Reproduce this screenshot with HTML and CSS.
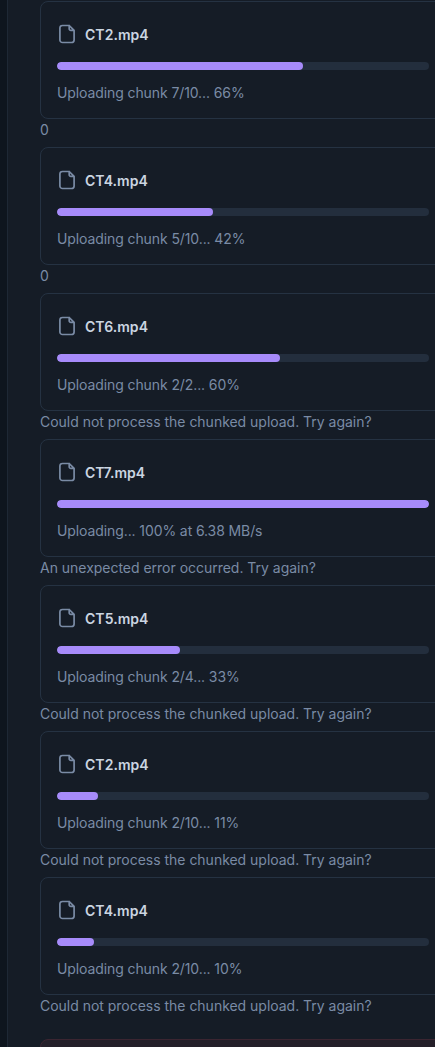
FILE: index.html
```html
<!DOCTYPE html>
<html lang="en">
<head>
  <meta charset="UTF-8">
  <title>Uploads</title>
  <link rel="stylesheet" href="styles.css">
</head>
<body>

  <!-- File icon shared by all upload cards -->
  <svg class="icon-defs" width="0" height="0">
    <symbol id="file-icon" viewBox="0 0 20 20">
      <path d="M12.2 1.5H5.5A2.6 2.6 0 0 0 2.9 4.1v11.8a2.6 2.6 0 0 0 2.6 2.6h9a2.6 2.6 0 0 0 2.6-2.6V6.4L12.2 1.5v3.2a1.7 1.7 0 0 0 1.7 1.7H17.1"/>
    </symbol>
  </svg>

  <main class="panel">
    <div id="upload-list"></div>
    <div class="error-box"></div>
  </main>

  <script>
    const uploads = [
      { name: 'CT2.mp4', percent: 66.1, status: 'Uploading chunk 7/10... 66%', message: '0' },
      { name: 'CT4.mp4', percent: 42, status: 'Uploading chunk 5/10... 42%', message: '0' },
      { name: 'CT6.mp4', percent: 60, status: 'Uploading chunk 2/2... 60%', message: 'Could not process the chunked upload. Try again?' },
      { name: 'CT7.mp4', percent: 100, status: 'Uploading... 100% at 6.38 MB/s', message: 'An unexpected error occurred. Try again?' },
      { name: 'CT5.mp4', percent: 33, status: 'Uploading chunk 2/4... 33%', message: 'Could not process the chunked upload. Try again?' },
      { name: 'CT2.mp4', percent: 11, status: 'Uploading chunk 2/10... 11%', message: 'Could not process the chunked upload. Try again?' },
      { name: 'CT4.mp4', percent: 10, status: 'Uploading chunk 2/10... 10%', message: 'Could not process the chunked upload. Try again?' }
    ];

    document.getElementById('upload-list').innerHTML = uploads.map(u => `
      <div class="upload">
        <div class="upload-card">
          <div class="file-row">
            <svg class="file-icon"><use href="#file-icon"/></svg>
            <strong>${u.name}</strong>
          </div>
          <div class="progress">
            <div class="progress-bar" style="width: ${u.percent}%"></div>
          </div>
          <div class="status">${u.status}</div>
        </div>
        <div class="message">${u.message}</div>
      </div>
    `).join('');
  </script>

</body>
</html>
```

FILE: styles.css
```css
* {
  box-sizing: border-box;
}
body {
  margin: 0;
  padding-left: 7px;
  height: 1047px;
  overflow: hidden;
  background: #0e151e;
  color: #7a8ba5;
  font-family: Inter, sans-serif;
  font-size: 14px;
  line-height: 20px;
}
.icon-defs {
  display: none;
}
.panel {
  height: 1047px;
  padding: 1px 0 0 32px;
  overflow: hidden;
  border-left: 1px solid #1e2835;
  background: #151c26;
}
.upload {
  width: 406px;
  height: 138px;
  margin-bottom: 8px;
}
.upload-card {
  height: 118px;
  padding: 16px;
  border: 1px solid #253242;
  border-radius: 8px;
}
.file-row {
  display: flex;
  align-items: center;
  gap: 8px;
  height: 32px;
}
.file-row strong {
  padding-top: 2px;
  color: #cbd5e1;
  font-weight: 600;
  letter-spacing: 0.04px;
}
.file-icon {
  width: 20px;
  height: 20px;
  fill: none;
  stroke: #7a8ba5;
  stroke-width: 1.7;
  stroke-linejoin: round;
}
.progress {
  height: 8px;
  margin: 12px 0 13px;
  overflow: hidden;
  border-radius: 4px;
  background: #232e3d;
}
.progress-bar {
  height: 8px;
  border-radius: 4px;
  background: #a78bfa;
}
.status {
  letter-spacing: -0.1px;
}
.message {
  padding-top: 1px;
  letter-spacing: -0.02px;
}
.error-box {
  width: 406px;
  height: 60px;
  margin-top: 24px;
  border: 1px solid #3b2531;
  border-radius: 8px;
  background: #241f29;
}
```
